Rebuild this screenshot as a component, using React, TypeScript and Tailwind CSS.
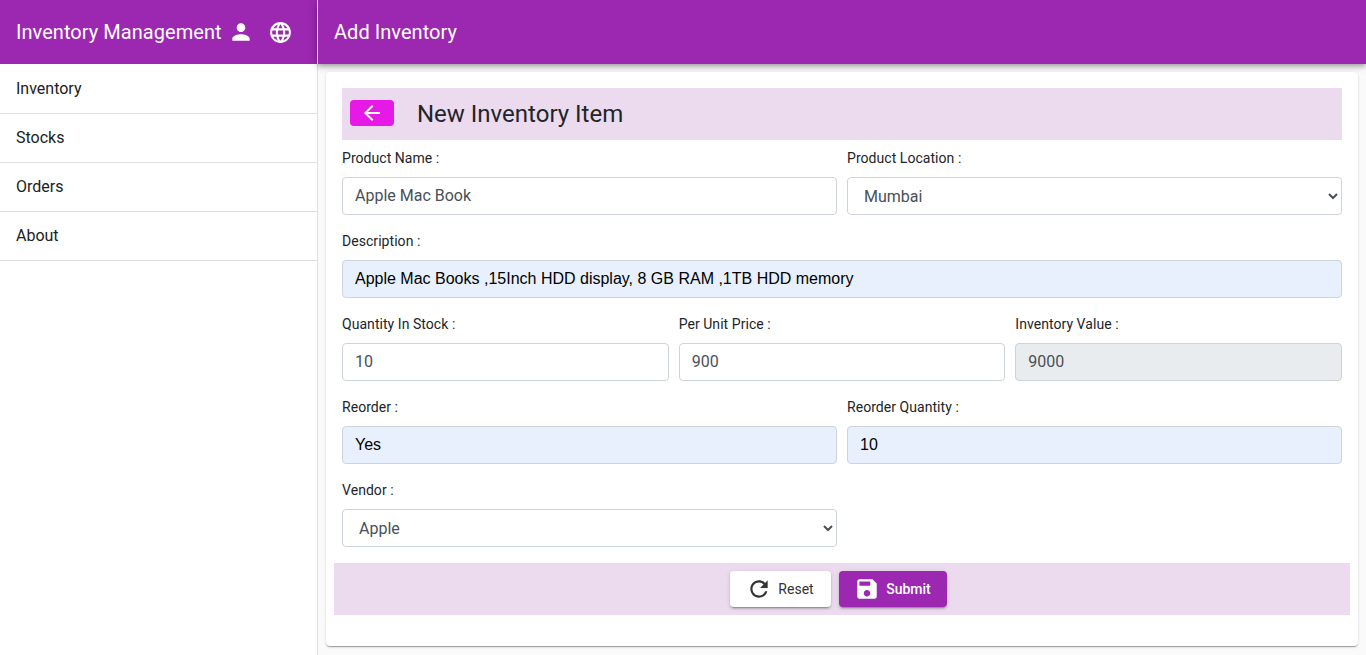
import React from "react";

const Icon = ({ d, className }: { d: string; className?: string }) => (
  <svg viewBox="0 0 24 24" fill="currentColor" className={className}>
    <path d={d} />
  </svg>
);

const person = "M12 12c2.21 0 4-1.79 4-4s-1.79-4-4-4-4 1.79-4 4 1.79 4 4 4zm0 2c-2.67 0-8 1.34-8 4v2h16v-2c0-2.66-5.33-4-8-4z";
const language = "M11.99 2C6.47 2 2 6.48 2 12s4.47 10 9.99 10C17.52 22 22 17.52 22 12S17.52 2 11.99 2zm6.93 6h-2.95c-.32-1.25-.78-2.45-1.38-3.56 1.84.63 3.37 1.91 4.33 3.56zM12 4.04c.83 1.2 1.48 2.53 1.91 3.96h-3.82c.43-1.43 1.08-2.76 1.91-3.96zM4.26 14C4.1 13.36 4 12.69 4 12s.1-1.36.26-2h3.38c-.08.66-.14 1.32-.14 2 0 .68.06 1.34.14 2H4.26zm.82 2h2.95c.32 1.25.78 2.45 1.38 3.56-1.84-.63-3.37-1.9-4.33-3.56zm2.95-8H5.08c.96-1.66 2.49-2.93 4.33-3.56C8.81 5.55 8.35 6.75 8.03 8zM12 19.96c-.83-1.2-1.48-2.53-1.91-3.96h3.82c-.43 1.43-1.08 2.76-1.91 3.96zM14.34 14H9.66c-.09-.66-.16-1.32-.16-2 0-.68.07-1.35.16-2h4.68c.09.65.16 1.32.16 2 0 .68-.07 1.34-.16 2zm.25 5.56c.6-1.11 1.06-2.31 1.38-3.56h2.95c-.96 1.65-2.49 2.93-4.33 3.56zM16.36 14c.08-.66.14-1.32.14-2 0-.68-.06-1.34-.14-2h3.38c.16.64.26 1.31.26 2s-.1 1.36-.26 2h-3.38z";
const arrowBack = "M20 11H7.83l5.59-5.59L12 4l-8 8 8 8 1.41-1.41L7.83 13H20v-2z";
const refresh = "M17.65 6.35C16.2 4.9 14.21 4 12 4c-4.42 0-7.99 3.58-7.99 8s3.57 8 7.99 8c3.73 0 6.84-2.55 7.73-6h-2.08c-.82 2.33-3.04 4-5.65 4-3.31 0-6-2.69-6-6s2.69-6 6-6c1.66 0 3.14.69 4.22 1.78L13 11h7V4l-2.35 2.35z";
const save = "M17 3H5c-1.11 0-2 .9-2 2v14c0 1.1.89 2 2 2h14c1.1 0 2-.9 2-2V7l-4-4zm-5 16c-1.66 0-3-1.34-3-3s1.34-3 3-3 3 1.34 3 3-1.34 3-3 3zm3-10H5V5h10v4z";

const Label = ({ children }: { children: React.ReactNode }) => (
  <label className="block h-[21px] mb-2 text-sm leading-[21px] tracking-[0.05px] text-[#212529]">{children}</label>
);

const Text = ({ label, value, kind }: { label: string; value: string; kind?: "auto" | "off" }) => (
  <div className="min-w-0">
    <Label>{label}</Label>
    <input
      readOnly
      value={value}
      className={
        kind === "auto"
          ? "block w-full h-[38px] px-3 text-base font-['Liberation_Sans',sans-serif] rounded border border-[#ced4da] outline-none bg-[#e8f0fe] text-black"
          : kind === "off"
          ? "block w-full h-[38px] pl-3 pr-3 pb-[2px] text-base rounded border border-[#ced4da] outline-none bg-[#e9ecef] text-[#495057]"
          : "block w-full h-[38px] pl-3 pr-3 pb-[2px] text-base rounded border border-[#ced4da] outline-none bg-white text-[#495057]"
      }
    />
  </div>
);

const Pick = ({ label, value }: { label: string; value: string }) => (
  <div className="min-w-0">
    <Label>{label}</Label>
    <select
      defaultValue={value}
      className="block w-full h-[38px] px-3 text-base rounded border border-[#ced4da] outline-none bg-white text-[#495057]"
    >
      <option>{value}</option>
    </select>
  </div>
);

export default function App() {
  const nav = ["Inventory", "Stocks", "Orders", "About"];
  return (
    <div className="flex h-[655px] overflow-hidden bg-[#fafafa] font-['Roboto',sans-serif]">
      <aside className="w-[318px] shrink-0 flex flex-col bg-white border-r border-[#e0e0e0]">
        <div className="h-16 shrink-0 flex items-center pl-4 bg-[#9c27b0] text-white">
          <span className="text-xl leading-none tracking-[0.05px] whitespace-nowrap">Inventory Management</span>
          <Icon d={person} className="w-[26px] h-[26px] ml-[6px]" />
          <Icon d={language} className="w-[25px] h-[25px] ml-[14px]" />
        </div>
        <nav className="pt-px">
          {nav.map((n) => (
            <div key={n} className="h-[49px] flex items-center pl-4 text-base text-[#212121] border-b border-[#e0e0e0]">
              {n}
            </div>
          ))}
        </nav>
      </aside>
      <div className="flex-1 min-w-0 flex flex-col">
        <header className="h-16 shrink-0 flex items-center pl-4 bg-[#9c27b0] text-white text-xl tracking-[0.05px] border-l border-white/80 -ml-px shadow-[0_2px_4px_-1px_rgba(0,0,0,0.2),0_4px_5px_0_rgba(0,0,0,0.14),0_1px_10px_0_rgba(0,0,0,0.12)]">
          Add Inventory
        </header>
        <main className="flex-1 p-2">
          <div className="h-[574px] bg-white rounded p-4 shadow-[0_2px_1px_-1px_rgba(0,0,0,0.2),0_1px_1px_0_rgba(0,0,0,0.14),0_1px_3px_0_rgba(0,0,0,0.12)]">
            <div className="h-[52px] flex items-center pl-2 bg-[#ecdbee]">
              <button className="w-11 h-[26px] mb-[2px] flex items-center justify-center rounded bg-[#e619e6] text-white">
                <Icon d={arrowBack} className="w-6 h-6" />
              </button>
              <h1 className="ml-[23px] text-2xl text-[#212529]">New Inventory Item</h1>
            </div>
            <div className="mt-2 flex flex-col gap-4">
              <div className="grid grid-cols-2 gap-x-[10px]">
                <Text label="Product Name :" value="Apple Mac Book" />
                <Pick label="Product Location :" value="Mumbai" />
              </div>
              <Text label="Description :" value="Apple Mac Books ,15Inch HDD display, 8 GB RAM ,1TB HDD memory" kind="auto" />
              <div className="grid grid-cols-3 gap-x-[10px]">
                <Text label="Quantity In Stock :" value="10" />
                <Text label="Per Unit Price :" value="900" />
                <Text label="Inventory Value :" value="9000" kind="off" />
              </div>
              <div className="grid grid-cols-2 gap-x-[10px]">
                <Text label="Reorder :" value="Yes" kind="auto" />
                <Text label="Reorder Quantity :" value="10" kind="auto" />
              </div>
              <div className="grid grid-cols-2 gap-x-[10px]">
                <Pick label="Vendor :" value="Apple" />
              </div>
              <div className="-mx-2 h-[52px] pr-2 flex items-center justify-center gap-2 bg-[#ecdbee]">
                <button className="w-[101px] h-9 flex items-center justify-center gap-[6px] rounded bg-white text-sm text-[#333333] shadow-[0_3px_1px_-2px_rgba(0,0,0,0.2),0_2px_2px_0_rgba(0,0,0,0.14),0_1px_5px_0_rgba(0,0,0,0.12)]">
                  <Icon d={refresh} className="w-[26px] h-[26px]" />
                  Reset
                </button>
                <button className="w-[108px] h-9 flex items-center justify-center gap-[6px] rounded bg-[#9c27b0] text-sm font-medium text-white shadow-[0_3px_1px_-2px_rgba(0,0,0,0.2),0_2px_2px_0_rgba(0,0,0,0.14),0_1px_5px_0_rgba(0,0,0,0.12)]">
                  <Icon d={save} className="w-[26px] h-[26px]" />
                  Submit
                </button>
              </div>
            </div>
          </div>
        </main>
      </div>
    </div>
  );
}
